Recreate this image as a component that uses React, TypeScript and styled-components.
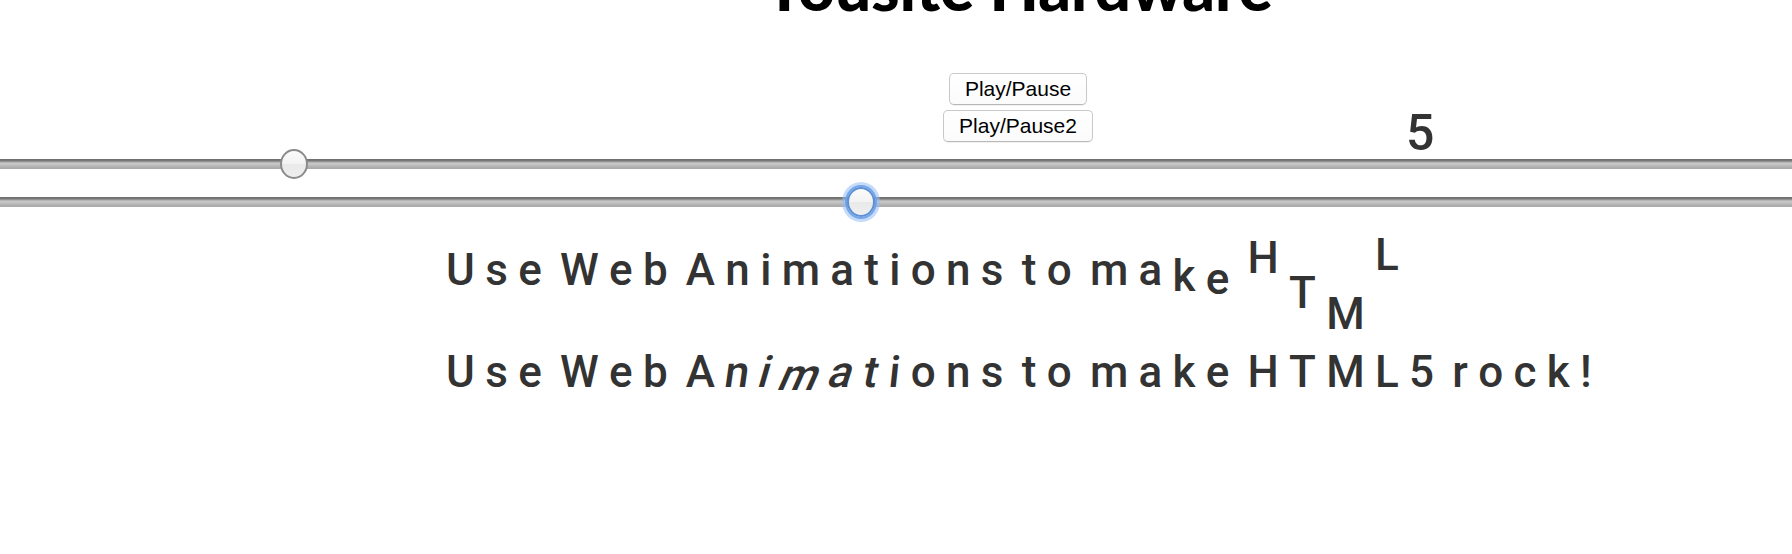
import React from "react";
import styled, { createGlobalStyle, css } from "styled-components";

const Global = createGlobalStyle`
  html, body { margin: 0; padding: 0; overflow: hidden; background: #fff; }
  body { width: 1792px; height: 554px; }
`;

const Page = styled.div`
  width: 2036px;
  display: flex;
  flex-direction: column;
`;

const Title = styled.h1`
  margin: -44px 0 0;
  text-align: center;
  font-family: "Lato", "Liberation Sans", sans-serif;
  font-weight: 900;
  font-size: 64px;
  line-height: 62px;
  color: #000;
`;

const ButtonRow = styled.div<{ $mt: number }>`
  display: grid;
  grid-template-columns: 1fr auto 1fr;
  align-items: start;
  margin-top: ${(p) => p.$mt}px;
`;

const Button = styled.button`
  grid-column: 2;
  font-family: "Liberation Sans", Arial, sans-serif;
  font-size: 21px;
  line-height: 24px;
  color: #000;
  background: linear-gradient(#ffffff, #fbfbfb);
  border: 1px solid #c9c9c9;
  border-bottom-color: #b8b8b8;
  border-radius: 5px;
  padding: 3px 15px 3px;
  box-shadow: 0 1px 1px rgba(0, 0, 0, 0.06);
`;

const Counter = styled.span`
  grid-column: 3;
  justify-self: start;
  margin: -2px 0 -50px 313px;
  font-family: "Roboto", sans-serif;
  font-weight: 500;
  font-size: 50px;
  line-height: 50px;
  color: #333;
`;

const thumb = css<{ $focus?: boolean }>`
  width: 28px;
  height: 30px;
  border-radius: 50%;
  box-sizing: border-box;
  border: 2px solid ${(p) => (p.$focus ? "#5b8fd6" : "#8b8b8b")};
  background: linear-gradient(#fbfbfb 0%, #f3f3f3 50%, #e9e9e9 51%, #efefef 100%);
  margin-top: -10px;
  ${(p) =>
    p.$focus &&
    css`
      box-shadow: 0 0 0 2px rgba(110, 160, 230, 0.9), 0 0 0 5px rgba(150, 190, 245, 0.55);
    `}
`;

const Slider = styled.input.attrs({ type: "range", min: 0, max: 1000 })<{ $focus?: boolean; $mt: number }>`
  -webkit-appearance: none;
  appearance: none;
  display: block;
  width: 1792px;
  height: 30px;
  margin: ${(p) => p.$mt}px 0 0;
  padding: 0;
  background: transparent;
  outline: none;
  &::-webkit-slider-runnable-track {
    height: 10px;
    background: linear-gradient(
      #6c6c6c 0px,
      #7c7c7c 2px,
      #a5a5a5 3px,
      #c7c7c7 4px,
      #c2c2c2 6px,
      #b5b5b5 7px,
      #a9a9a9 10px
    );
  }
  &::-webkit-slider-thumb {
    -webkit-appearance: none;
    ${thumb}
  }
`;

const TextBlock = styled.div<{ $mt: number }>`
  align-self: center;
  display: flex;
  flex-direction: column;
  margin: ${(p) => p.$mt}px 0 0 12px;
`;

const Line = styled.div`
  font-family: "Roboto", sans-serif;
  font-weight: 500;
  font-size: 44px;
  line-height: 102px;
  color: #333;
  white-space: nowrap;
  word-spacing: -3px;
`;

const Letter = styled.span<{ $dy?: number; $skew?: number; $hidden?: boolean }>`
  display: inline-block;
  margin-right: 10.3px;
  word-spacing: 0;
  transform: translateY(${(p) => p.$dy ?? 0}px) skewX(${(p) => p.$skew ?? 0}deg);
  visibility: ${(p) => (p.$hidden ? "hidden" : "visible")};
`;

type L = { c: string; dy?: number; skew?: number; hidden?: boolean };

const TEXT = "Use Web Animations to make HTML5 rock!";

function build(mod: (i: number, c: string) => Partial<L>): L[] {
  return TEXT.split("").map((c, i) => ({ c, ...mod(i, c) }));
}

const line1 = build((i) => {
  const map: Record<number, Partial<L>> = {
    24: { dy: 6 },
    25: { dy: 9 },
    27: { dy: -12 },
    28: { dy: 23 },
    29: { dy: 44 },
    30: { dy: -15 },
  };
  if (i >= 31) return { hidden: true };
  return map[i] ?? {};
});

const line2 = build((i) => {
  const map: Record<number, Partial<L>> = {
    9: { skew: -8 },
    10: { skew: -16 },
    11: { skew: -24, dy: 3 },
    12: { skew: -18 },
    13: { skew: -12 },
    14: { skew: -6 },
  };
  return map[i] ?? {};
});

function renderLine(ls: L[]) {
  return ls.map((l, i) =>
    l.c === " " ? (
      " "
    ) : (
      <Letter key={i} $dy={l.dy} $skew={l.skew} $hidden={l.hidden}>
        {l.c}
      </Letter>
    )
  );
}

export default function App() {
  return (
    <>
      <Global />
      <Page>
        <Title>Yousite Hardware</Title>
        <ButtonRow $mt={55}>
          <Button>Play/Pause</Button>
        </ButtonRow>
        <ButtonRow $mt={5}>
          <Button>Play/Pause2</Button>
          <Counter>5</Counter>
        </ButtonRow>
        <Slider $mt={7} defaultValue={159} />
        <Slider $mt={8} defaultValue={480} $focus />
        <TextBlock $mt={2}>
          <Line>{renderLine(line1)}</Line>
          <Line>{renderLine(line2)}</Line>
        </TextBlock>
      </Page>
    </>
  );
}
